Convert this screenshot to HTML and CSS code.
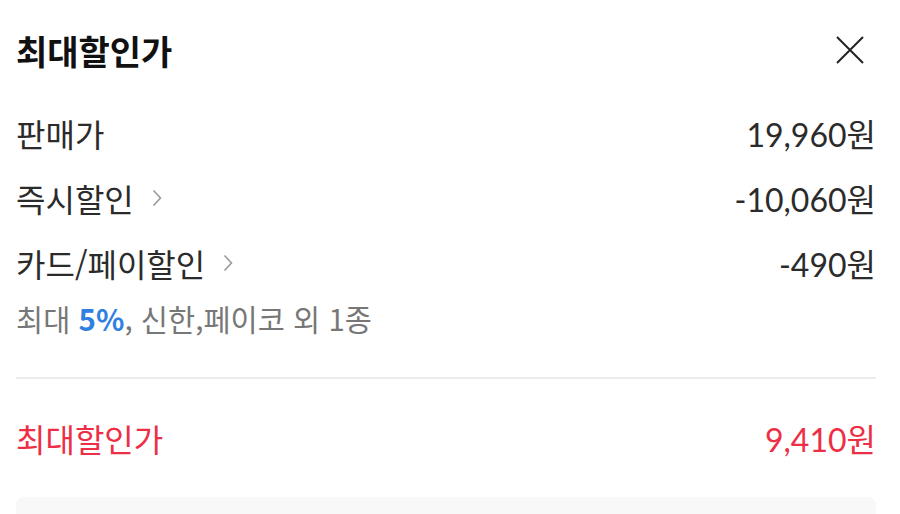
FILE: index.html
```html
<!DOCTYPE html>
<html lang="ko">
<head>
    <meta charset="utf-8">
    <title>최대할인가</title>
    <link rel="stylesheet" href="styles.css">
</head>
<body>
    <div class="sheet">
        <div class="sheet-header">
            <h1>최대할인가</h1>
            <button class="close-btn" type="button" aria-label="닫기">
                <svg width="28" height="28" viewBox="0 0 28 28">
                    <path d="M1 1 L27 27 M27 1 L1 27" stroke="#222" stroke-width="2" fill="none"/>
                </svg>
            </button>
        </div>

        <div class="price-row">
            <span class="label">판매가</span>
            <span class="amount">19,960원</span>
        </div>
        <div class="price-row">
            <span class="label">즉시할인
                <svg class="chevron" width="10" height="18" viewBox="0 0 10 18">
                    <path d="M1.5 1.5 L8.5 9 L1.5 16.5" stroke="#999" stroke-width="1.6" fill="none"/>
                </svg>
            </span>
            <span class="amount">-10,060원</span>
        </div>
        <div class="price-row">
            <span class="label">카드/페이할인
                <svg class="chevron" width="10" height="18" viewBox="0 0 10 18">
                    <path d="M1.5 1.5 L8.5 9 L1.5 16.5" stroke="#999" stroke-width="1.6" fill="none"/>
                </svg>
            </span>
            <span class="amount">-490원</span>
        </div>
        <p class="card-note">최대 <strong>5%</strong>, 신한,페이코 외 1종</p>

        <hr class="divider">

        <div class="price-row total">
            <span class="label">최대할인가</span>
            <span class="amount">9,410원</span>
        </div>

        <div class="info-box"></div>
    </div>
</body>
</html>
```

FILE: styles.css
```css
body {
    margin: 0;
    background: #fff;
    font-family: "Noto Sans CJK KR", "Noto Sans", sans-serif;
    color: #2b2b2b;
    overflow: hidden;
}

.sheet {
    padding: 0 24px 0 16px;
}

.sheet-header {
    height: 100px;
    display: flex;
    align-items: center;
    justify-content: space-between;
}

.sheet-header h1 {
    margin: 0;
    font-size: 34px;
    font-weight: 700;
    color: #111;
}

.close-btn {
    background: none;
    border: none;
    padding: 0;
    margin-right: 12px;
    width: 28px;
    height: 28px;
    cursor: pointer;
}

.close-btn svg {
    display: block;
}

.price-row {
    height: 65px;
    display: flex;
    align-items: center;
    justify-content: space-between;
}

.label {
    font-size: 32px;
    display: flex;
    align-items: center;
}

.chevron {
    margin-left: 18px;
}

.amount {
    font-family: Lato, "Noto Sans CJK KR", sans-serif;
    font-size: 32px;
}

.card-note {
    margin: 3px 0 0;
    line-height: 40px;
    font-size: 29.5px;
    color: #777;
}

.card-note strong {
    color: #2f80e0;
    font-weight: 700;
}

.divider {
    margin: 39px 0 0;
    border: none;
    height: 2px;
    background: #ececec;
}

.price-row.total {
    height: 118px;
    color: #ee2e45;
}

.info-box {
    height: 60px;
    background: #f8f8f8;
    border-radius: 8px;
}
```
